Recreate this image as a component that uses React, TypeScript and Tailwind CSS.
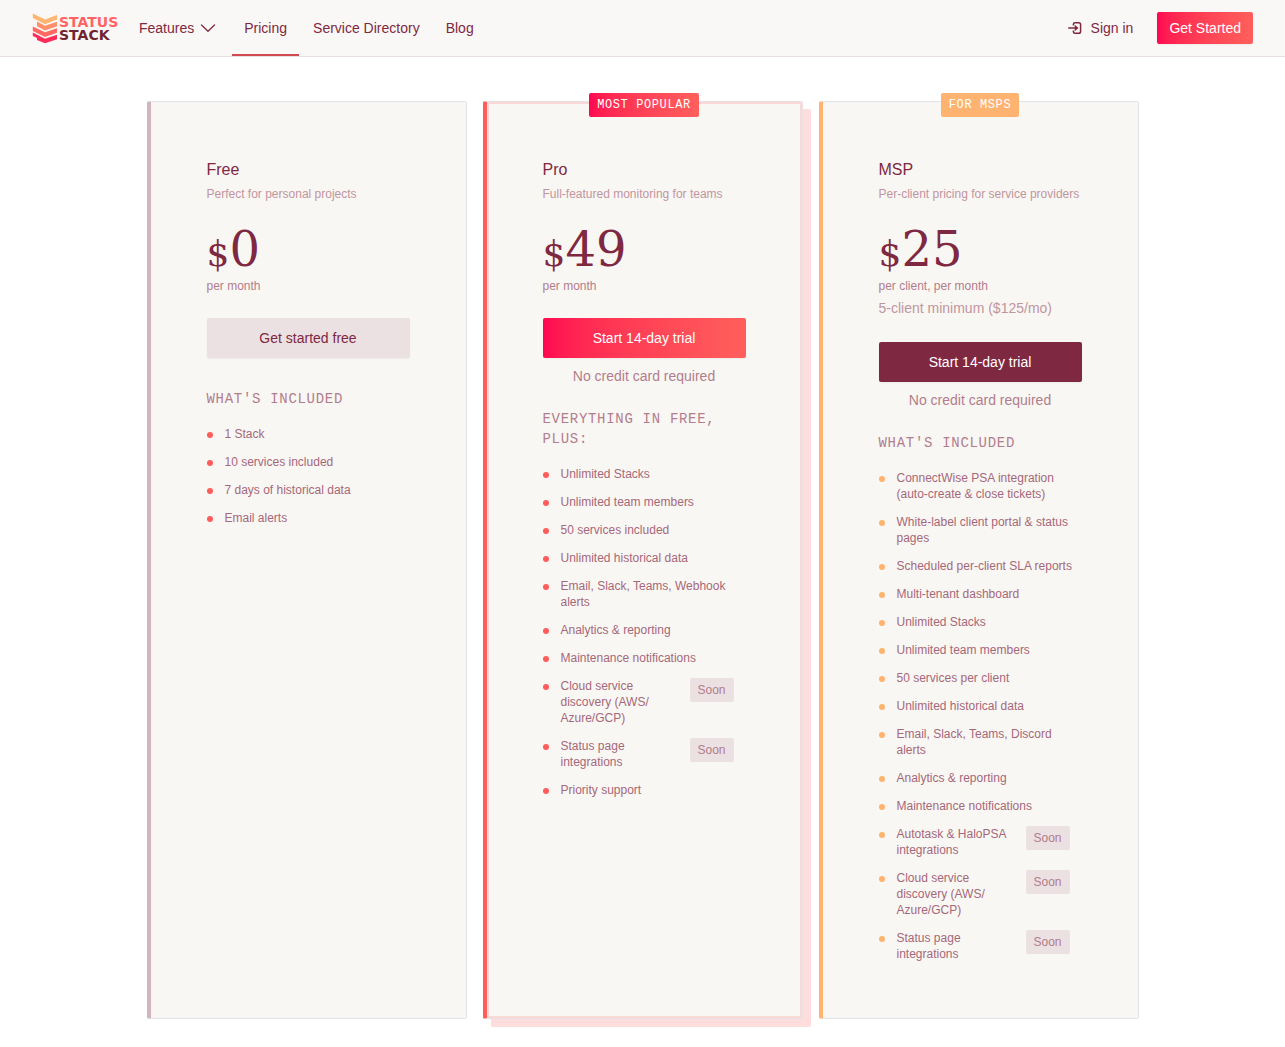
import clsx from "clsx"

type Feature = { label: string; soon?: boolean }

type Plan = {
  name: string
  description: string
  price: string
  period: string
  minimum?: string
  cta: string
  ctaClass: string
  note?: string
  heading: string
  badge?: string
  badgeClass?: string
  cardClass: string
  dotClass: string
  features: Feature[]
}

const plans: Plan[] = [
  {
    name: "Free",
    description: "Perfect for personal projects",
    price: "0",
    period: "per month",
    cta: "Get started free",
    ctaClass: "bg-[#ebe0e2] text-[#7f2842]",
    heading: "What's included",
    cardClass: "border-l-[#d3b5be]",
    dotClass: "bg-[#ff5c5c]",
    features: [
      { label: "1 Stack" },
      { label: "10 services included" },
      { label: "7 days of historical data" },
      { label: "Email alerts" },
    ],
  },
  {
    name: "Pro",
    description: "Full-featured monitoring for teams",
    price: "49",
    period: "per month",
    cta: "Start 14-day trial",
    ctaClass: "bg-linear-to-r from-[#ff0550] to-[#ff5f5c] text-white",
    note: "No credit card required",
    heading: "Everything in Free, plus:",
    badge: "Most popular",
    badgeClass: "bg-linear-to-r from-[#ff0550] to-[#ff5f5c]",
    cardClass:
      "border-l-[#ff5c5c] shadow-[8px_8px_0_#ffdddd] inset-ring-2 inset-ring-[#fad8d6]",
    dotClass: "bg-[#ff5c5c]",
    features: [
      { label: "Unlimited Stacks" },
      { label: "Unlimited team members" },
      { label: "50 services included" },
      { label: "Unlimited historical data" },
      { label: "Email, Slack, Teams, Webhook alerts" },
      { label: "Analytics & reporting" },
      { label: "Maintenance notifications" },
      { label: "Cloud service discovery (AWS/\u200bAzure/GCP)", soon: true },
      { label: "Status page integrations", soon: true },
      { label: "Priority support" },
    ],
  },
  {
    name: "MSP",
    description: "Per-client pricing for service providers",
    price: "25",
    period: "per client, per month",
    minimum: "5-client minimum ($125/mo)",
    cta: "Start 14-day trial",
    ctaClass: "bg-[#7f2842] text-white",
    note: "No credit card required",
    heading: "What's included",
    badge: "For MSPs",
    badgeClass: "bg-[#ffb370]",
    cardClass: "border-l-[#ffb370]",
    dotClass: "bg-[#ffb370]",
    features: [
      { label: "ConnectWise PSA integration (auto-create & close tickets)" },
      { label: "White-label client portal & status pages" },
      { label: "Scheduled per-client SLA reports" },
      { label: "Multi-tenant dashboard" },
      { label: "Unlimited Stacks" },
      { label: "Unlimited team members" },
      { label: "50 services per client" },
      { label: "Unlimited historical data" },
      { label: "Email, Slack, Teams, Discord alerts" },
      { label: "Analytics & reporting" },
      { label: "Maintenance notifications" },
      { label: "Autotask & HaloPSA integrations", soon: true },
      { label: "Cloud service discovery (AWS/\u200bAzure/GCP)", soon: true },
      { label: "Status page integrations", soon: true },
    ],
  },
]

function Logo() {
  return (
    <svg viewBox="0 0 96 32" className="h-8 w-24" role="img" aria-label="Status Stack">
      <path d="M.8 1.500L13 7.500l12-4.500v4.500l-12 4.700L.8 6z" fill="#ffb573" />
      <path d="M5 9.500l8 4.200 12-4v4.600l-12 4.200-8-4.200z" fill="#ff8f68" />
      <path d="M.8 14.500L13 20.200l12-4v4.600L13 25 .8 19z" fill="#ff6961" />
      <path d="M.8 20.600L13 26.700l12-4v4.600l-12 4-8-3.400v-2l-4.200-2z" fill="#ff2a57" />
      <g fontFamily="DejaVu Sans, sans-serif" fontWeight="700" fontSize="14">
        <text x="27" y="15" fill="#ff6464">STATUS</text>
        <text x="27" y="28" fill="#6f2430">STACK</text>
      </g>
    </svg>
  )
}

function ChevronIcon() {
  return (
    <svg viewBox="0 0 20 20" className="h-5 w-5" fill="none" stroke="currentColor" strokeWidth="1.3" strokeLinecap="round" strokeLinejoin="round" aria-hidden="true">
      <path d="M3.500 7L10 13.200 16.500 7" />
    </svg>
  )
}

function SignInIcon() {
  return (
    <svg viewBox="0 0 14 14" className="h-3.5 w-3.5 overflow-visible" fill="none" stroke="currentColor" strokeWidth="1.5" aria-hidden="true">
      <path d="M4.400 4.400V3.200Q4.400 1.700 5.900 1.700h3.800q1.900 0 1.900 1.800v7q0 1.800-1.900 1.800H5.900q-1.500 0-1.500-1.500V9.600" />
      <path d="M-.8 7h8" />
      <path d="M5.700 3.800L9.500 7 5.700 10.200z" fill="currentColor" stroke="none" />
    </svg>
  )
}

function Header() {
  return (
    <header className="border-b border-[#ecdcde] bg-[#faf8f6]">
      <div className="flex h-14 items-center justify-between px-8">
        <nav className="flex h-full items-center gap-0.5">
          <a href="#" className="mr-[9px]">
            <Logo />
          </a>
          <button type="button" className="flex h-full items-center gap-1 pr-3">
            Features
            <ChevronIcon />
          </button>
          <a href="#" className="flex h-full items-center border-b-2 border-[#d14a52] px-3 pt-0.5">
            Pricing
          </a>
          <a href="#" className="px-3">Service Directory</a>
          <a href="#" className="px-3">Blog</a>
        </nav>
        <div className="flex items-center gap-6">
          <a href="#" className="flex items-center gap-2">
            <SignInIcon />
            Sign in
          </a>
          <a href="#" className="rounded-xs bg-linear-to-r from-[#ff0550] to-[#ff5f5c] px-3 py-1.5 text-white shadow-xs">
            Get Started
          </a>
        </div>
      </div>
    </header>
  )
}

function PlanCard({ plan }: { plan: Plan }) {
  return (
    <section className={clsx("relative rounded-xs border border-l-4 border-[#e4e2e6] bg-[#f9f7f3] p-14", plan.cardClass)}>
      {plan.badge && (
        <div className="absolute inset-x-0 -top-[9px] flex justify-center">
          <span className={clsx("rounded-xs px-2 py-1 font-['Liberation_Mono',monospace] text-xs tracking-wider text-white uppercase", plan.badgeClass)}>
            {plan.badge}
          </span>
        </div>
      )}

      <h2 className="text-base">{plan.name}</h2>
      <p className="mt-1 text-xs whitespace-nowrap text-[#c1959f]">{plan.description}</p>

      <p className="mt-6 font-['DejaVu_Serif',serif] text-5xl leading-[46px]">
        <span className="text-4xl leading-none">$</span>
        {plan.price}
      </p>
      <p className="mt-1.5 text-xs text-[#b27d8d]">{plan.period}</p>
      {plan.minimum && <p className="mt-1 text-[#c1959f]">{plan.minimum}</p>}

      <button type="button" className={clsx("mt-6 h-10 w-full rounded-xs shadow-xs", plan.ctaClass)}>
        {plan.cta}
      </button>
      {plan.note && <p className="mt-2 text-center text-[#b27d8d]">{plan.note}</p>}

      <h3 className={clsx("font-['Liberation_Mono',monospace] tracking-wider text-[#b27d8d] uppercase", plan.note ? "mt-[23px]" : "mt-[31px]")}>
        {plan.heading}
      </h3>
      <ul className="mt-[17px] space-y-3 text-xs text-[#a5687a]">
        {plan.features.map((feature) => (
          <li key={feature.label} className="flex items-start gap-3">
            <span className={clsx("mt-1.5 h-1.5 w-1.5 shrink-0 rounded-full", plan.dotClass)} />
            <span className="flex-1">{feature.label}</span>
            {feature.soon && (
              <span className="mr-3 w-11 rounded-xs bg-[#ebe0e2] py-1 text-center text-[#b27d8d]">Soon</span>
            )}
          </li>
        ))}
      </ul>
    </section>
  )
}

export default function App() {
  return (
    <div className="min-h-screen bg-white font-['Liberation_Sans',Arial,sans-serif] text-sm text-[#7f2842]">
      <Header />
      <main className="mx-auto grid max-w-5xl gap-4 px-4 pt-11 pb-7 md:grid-cols-3">
        {plans.map((plan) => (
          <PlanCard key={plan.name} plan={plan} />
        ))}
      </main>
    </div>
  )
}
